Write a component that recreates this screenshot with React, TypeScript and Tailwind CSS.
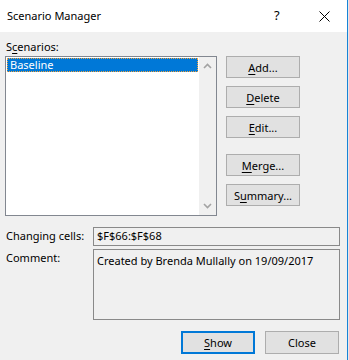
import type { ReactNode } from 'react';

const font = "font-['Noto_Sans','Liberation_Sans',sans-serif]";

function Btn({ children, primary, className = '' }: { children: ReactNode; primary?: boolean; className?: string }) {
  return (
    <div
      className={`flex h-[22px] w-[74px] items-center justify-center bg-[#e1e1e1] text-[11px] leading-none text-black ${
        primary ? 'border-2 border-[#0078d7]' : 'border border-[#adadad]'
      } ${className}`}
    >
      {children}
    </div>
  );
}

function U({ children }: { children: ReactNode }) {
  return <span className="underline underline-offset-2">{children}</span>;
}

function ScrollArrow({ up }: { up?: boolean }) {
  return (
    <svg width="9" height="6" viewBox="0 0 9 6" className="block">
      <path d={up ? 'M1 5 L4.5 1.5 L8 5' : 'M1 1 L4.5 4.5 L8 1'} fill="none" stroke="#a3a3a3" strokeWidth="1.6" />
    </svg>
  );
}

export default function App() {
  return (
    <div className={`flex h-[360px] w-[349px] bg-[#e8e8e8] ${font}`}>
      <div className="flex h-full w-[348px] flex-col border-r border-[#1883d7] bg-[#f0f0f0]">
        {/* title bar */}
        <div className="flex h-[32px] shrink-0 items-center bg-white pl-[7px] text-[11px] text-black">
          <span className="flex-1">Scenario Manager</span>
          <span className="w-[10px] text-[13px]">?</span>
          <svg width="11" height="11" viewBox="0 0 11 11" className="ml-[35px] mr-[17px]">
            <path d="M0.5 0.5 L10.5 10.5 M10.5 0.5 L0.5 10.5" stroke="#000" strokeWidth="1" />
          </svg>
        </div>

        <div className="flex flex-1 flex-col px-[5px] text-[11px] text-black">
          <div className="mt-[7px] h-[16px] pl-px leading-[16px]">
            S<U>c</U>enarios:
          </div>
          <div className="mt-px flex">
            {/* list box */}
            <div className="flex h-[160px] w-[212px] border border-[#828790] bg-white">
              <div className="flex-1 p-px">
                <div className="flex h-[14px] items-center border border-dotted border-[#f3a33c] bg-[#0078d7] pl-[2px] text-white">
                  Baseline
                </div>
              </div>
              <div className="flex w-[17px] flex-col items-center justify-between bg-[#f0f0f0] py-[6px]">
                <ScrollArrow up />
                <ScrollArrow />
              </div>
            </div>
            {/* buttons */}
            <div className="ml-[9px] flex flex-col">
              <Btn>
                <U>A</U>dd...
              </Btn>
              <Btn className="mt-[8px]">
                <U>D</U>elete
              </Btn>
              <Btn className="mt-[8px]">
                <U>E</U>dit...
              </Btn>
              <Btn className="mt-[16px]">
                <U>M</U>erge...
              </Btn>
              <Btn className="mt-[8px]">
                S<U>u</U>mmary...
              </Btn>
            </div>
          </div>

          <div className="mt-[11px] flex items-center">
            <span className="w-[88px] pl-px">Changing cells:</span>
            <div className="mr-[2px] flex h-[19px] flex-1 items-center border border-[#898989] pl-[3px]">$F$66:$F$68</div>
          </div>
          <div className="mt-[3px] flex">
            <span className="w-[88px] pl-px pt-[1px] leading-[16px]">Comment:</span>
            <div className="mr-[2px] h-[71px] flex-1 border border-[#898989] pl-[3px] pt-[3px] leading-[16px]">
              Created by Brenda Mullally on 19/09/2017
            </div>
          </div>

          <div className="mt-[11px] flex justify-end gap-[10px] pr-[3px]">
            <Btn primary className="h-[23px]">
              <U>S</U>how
            </Btn>
            <Btn className="h-[23px]">Close</Btn>
          </div>
        </div>
      </div>
    </div>
  );
}
